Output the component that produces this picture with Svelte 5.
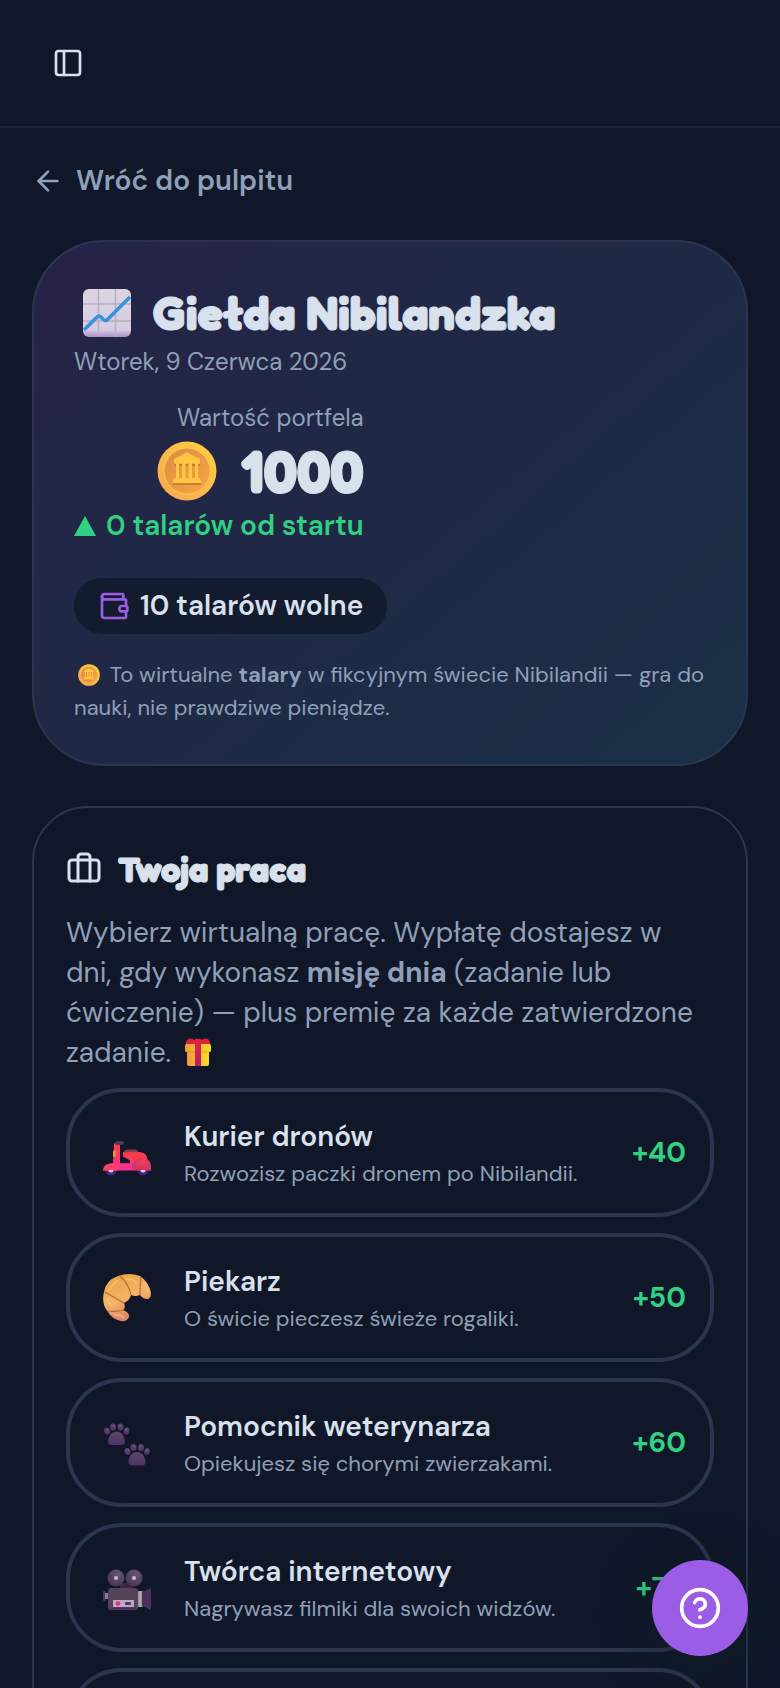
<script lang="ts">
  interface Job {
    icon: "scooter" | "croissant" | "paws" | "camera" | "gift";
    name: string;
    description: string;
    pay: number;
  }

  const jobs: Job[] = [
    { icon: "scooter", name: "Kurier dronów", description: "Rozwozisz paczki dronem po Nibilandii.", pay: 40 },
    { icon: "croissant", name: "Piekarz", description: "O świcie pieczesz świeże rogaliki.", pay: 50 },
    { icon: "paws", name: "Pomocnik weterynarza", description: "Opiekujesz się chorymi zwierzakami.", pay: 60 },
    { icon: "camera", name: "Twórca internetowy", description: "Nagrywasz filmiki dla swoich widzów.", pay: 70 },
    { icon: "gift", name: "Sprzedawca", description: "Pakujesz prezenty dla klientów.", pay: 80 }
  ];

  const total = 1000;
  const change = 0;
  const free = 10;

  let selected = $state("");
</script>

<!-- shared gradients for the emoji drawings -->
<svg class="defs" width="0" height="0" aria-hidden="true">
  <defs>
    <linearGradient id="paper" x1="0" y1="0" x2="0" y2="1">
      <stop offset="0" stop-color="#dcd6df" />
      <stop offset="0.85" stop-color="#d8cbe6" />
      <stop offset="1" stop-color="#a98fc0" />
    </linearGradient>
    <linearGradient id="coinRim" x1="1" y1="0" x2="0" y2="1">
      <stop offset="0" stop-color="#ffd040" />
      <stop offset="1" stop-color="#f7a552" />
    </linearGradient>
    <linearGradient id="coinFace" x1="0" y1="0" x2="1" y2="1">
      <stop offset="0" stop-color="#dd8d45" />
      <stop offset="1" stop-color="#f6a545" />
    </linearGradient>
    <linearGradient id="box" x1="0" y1="0" x2="1" y2="0">
      <stop offset="0" stop-color="#f39a3c" />
      <stop offset="1" stop-color="#fbdc28" />
    </linearGradient>
    <linearGradient id="ribbon" x1="0" y1="0" x2="0" y2="1">
      <stop offset="0" stop-color="#e0243c" />
      <stop offset="1" stop-color="#b3206f" />
    </linearGradient>
    <linearGradient id="red" x1="0" y1="0" x2="0" y2="1">
      <stop offset="0" stop-color="#ff4048" />
      <stop offset="1" stop-color="#f9309a" />
    </linearGradient>
    <radialGradient id="hull" cx="0.6" cy="0.3" r="0.8">
      <stop offset="0" stop-color="#ee3f60" />
      <stop offset="1" stop-color="#c9305f" />
    </radialGradient>
    <linearGradient id="crust" x1="0" y1="0" x2="0.4" y2="1">
      <stop offset="0" stop-color="#e9a23f" />
      <stop offset="0.6" stop-color="#f4b468" />
      <stop offset="1" stop-color="#dd7f63" />
    </linearGradient>
    <linearGradient id="pad" x1="0" y1="0" x2="0" y2="1">
      <stop offset="0" stop-color="#594a60" />
      <stop offset="1" stop-color="#50306e" />
    </linearGradient>
    <radialGradient id="reel" cx="0.6" cy="0.3" r="0.8">
      <stop offset="0" stop-color="#6a5670" />
      <stop offset="1" stop-color="#43324f" />
    </radialGradient>
    <linearGradient id="lens" x1="0" y1="0" x2="1" y2="0">
      <stop offset="0" stop-color="#8d8291" />
      <stop offset="0.6" stop-color="#b7adba" />
      <stop offset="1" stop-color="#75667d" />
    </linearGradient>
  </defs>
</svg>

{#snippet coin(cls: string)}
  <svg class={cls} viewBox="0 0 60 60" aria-hidden="true">
    <circle cx="30" cy="30" r="29.5" fill="url(#coinRim)" />
    <circle cx="30" cy="30" r="23.5" fill="#ffc84a" />
    <circle cx="30" cy="30" r="22.5" fill="url(#coinFace)" />
    <path d="M16 42h28v2H16zM18 23h25v2H18z" fill="#cd7b38" />
    <path
      d="M30 11.5 43 18v4.500H41V37h2v1.500h1V42H16v-3.500h1V37h2V22.500h-2V18ZM22 22.500V37h3V22.500Zm6.500 0V37h3V22.500Zm6.500 0V37h3V22.500Z"
      fill="#ffc642"
      fill-rule="evenodd"
    />
  </svg>
{/snippet}

{#snippet gift(cls: string)}
  <svg class={cls} viewBox="0 0 28 30" aria-hidden="true">
    <path d="M3 9a4 4 0 0 1 7-6 4 4 0 0 1 4-1 4 4 0 0 1 4 1 4 4 0 0 1 7 6Z" fill="#dc2238" />
    <path d="M3 11h22v16a2 2 0 0 1-2 2H5a2 2 0 0 1-2-2Z" fill="url(#box)" />
    <rect x="1" y="7" width="26" height="8" rx="1.500" fill="url(#box)" />
    <path d="M3 15h22" stroke="#d9822f" stroke-width="1" opacity="0.6" />
    <path d="M11 7l1-4h4l1 4v22h-6Z" fill="url(#ribbon)" />
  </svg>
{/snippet}

{#snippet jobIcon(name: Job["icon"])}
  {#if name === "scooter"}
    <svg class="emoji" viewBox="0 0 48 48" aria-hidden="true">
      <circle cx="8" cy="41" r="5.500" fill="#4d2377" />
      <circle cx="40" cy="41" r="5.500" fill="#4d2377" />
      <g transform="translate(0 10.5) scale(1 0.91)">
        <path d="M11 6q0-3 3-3h3v23h10v-3l-7-5v-4h17q7 1 7 7l4 8v5H0q1-7 10-8Z" fill="url(#red)" />
        <rect x="10" y="12" width="2.500" height="7" rx="1" fill="#e5a51b" />
        <path d="M20 14q8-2 17 0 7 1 7 8l-13 1-11-4Z" fill="#fb3a4c" />
        <path d="M21 14q0-3 5-3h5q4 0 4 3Z" fill="#84434b" />
        <path d="M0 34q0-8 10-8 5 0 5 8Z" fill="#fc3f66" />
        <path d="M29 29q1-8 9-8 7 0 9 4 2 5 0 9H33q-4 0-4-5" fill="url(#hull)" />
        <rect x="12" y="2" width="9" height="4" rx="2" fill="#503b52" />
      </g>
      <path d="M5.500 41a2.500 2.500 0 0 0 5 0ZM37.500 41a2.500 2.500 0 0 0 5 0Z" fill="#e3cdf0" />
    </svg>
  {:else if name === "croissant"}
    <svg class="emoji" viewBox="0 0 48 48" aria-hidden="true">
      <path
        d="M1 18Q3 6 15 2q11-4 22 0 9 6 11 17 0 6-4 6-4 0-7-4-5 2-9 0-1 5-7 8 2 5-1 7 7 3 6 7-2 5-8 4-9-2-13-9-7-8-4-20Z"
        fill="url(#crust)"
      />
      <path d="M2 18 21 29M17 2q9 8 11 19M38 3q-1 11-1 18M5 37q9 1 15-1" fill="none" stroke="#b96a3c" stroke-width="1.200" />
      <path d="M6 16q5-8 9-9M23 5q8 0 10 4M41 9q3 4 4 9M5 25q0 5 4 7M12 41q7 0 9 3" fill="none" stroke="#fbcf88" stroke-width="2" opacity="0.5" stroke-linecap="round" />
    </svg>
  {:else if name === "paws"}
    <svg class="emoji" viewBox="0 -2 48 48" aria-hidden="true">
      {#each [[0, 0], [20.5, 20.5]] as [x, y]}
        <g transform="translate({x} {y})" fill="url(#pad)">
          <ellipse cx="4" cy="10" rx="2.800" ry="3.600" transform="rotate(-15 4 10)" />
          <ellipse cx="10" cy="6" rx="3" ry="3.600" />
          <ellipse cx="17.500" cy="6" rx="3" ry="3.600" />
          <ellipse cx="23.500" cy="10" rx="2.800" ry="3.600" transform="rotate(15 23.500 10)" />
          <path d="M13.500 10.500q6 0 8 7 2 6.500-3 6.500h-10q-5 0-3-6.500 2-7 8-7" />
          <g fill="#806695" opacity="0.7">
            <circle cx="5" cy="9" r="1" />
            <circle cx="11" cy="5" r="1" />
            <circle cx="17" cy="5" r="1" />
            <circle cx="23" cy="9" r="1" />
          </g>
        </g>
      {/each}
    </svg>
  {:else if name === "camera"}
    <svg class="emoji" viewBox="0 -2 48 48" aria-hidden="true">
      <rect x="0" y="25" width="2.500" height="10" rx="1" fill="#4b3657" />
      <rect x="2" y="27" width="4" height="6" fill="#8d7d96" />
      <path d="M17 17h13v7H17Z" fill="#3c2646" />
      <circle cx="13" cy="12" r="8.500" fill="url(#reel)" />
      <circle cx="31" cy="12" r="8.500" fill="url(#reel)" />
      <circle cx="13" cy="12" r="2" fill="#c9bccd" />
      <circle cx="31" cy="12" r="2" fill="#c9bccd" />
      <rect x="34" y="25" width="6" height="16" fill="url(#lens)" />
      <path d="M39 26 48 22v22l-9-4Z" fill="#49305a" />
      <rect x="5" y="22" width="30" height="22" rx="3" fill="#544258" />
      <path d="M7 42.500h26" stroke="#48305c" stroke-width="2" />
      <rect x="10" y="34" width="21" height="7" fill="#bda8c9" />
      <circle cx="15" cy="37.500" r="2.300" fill="#f92f68" />
      <rect x="22" y="36" width="6" height="3" rx="1" fill="#4f3c58" />
    </svg>
  {:else}
    {@render gift("emoji")}
  {/if}
{/snippet}

<div class="shell">
  <header class="topbar">
    <button type="button" class="menu" aria-label="Przełącz panel boczny">
      <svg class="icon" width="32" height="32" viewBox="0 0 24 24" aria-hidden="true">
        <rect width="18" height="18" x="3" y="3" rx="2" />
        <path d="M9 3v18" />
      </svg>
    </button>
  </header>

  <main>
    <a class="back" href="#pulpit">
      <svg class="icon" width="32" height="32" viewBox="0 0 24 24" aria-hidden="true">
        <path d="m12 19-7-7 7-7" />
        <path d="M19 12H5" />
      </svg>
      Wróć do pulpitu
    </a>

    <section class="hero">
      <h1>
        <svg class="emoji" viewBox="0 0 48 48" aria-hidden="true">
          <rect width="48" height="48" rx="6" fill="url(#paper)" />
          <path d="M15.500 0v48M32.500 0v48M0 15h48M0 32h48" stroke="#b9aebd" stroke-width="1.500" />
          <path d="M1 41 14 28q2-2 4 0l2.500 2.500q2 2 4 0L47 8" fill="none" stroke="#3294dc" stroke-width="3.500" />
        </svg>
        Giełda Nibilandzka
      </h1>
      <p class="small">Wtorek, 9 Czerwca 2026</p>

      <div class="wallet">
        <span class="small">Wartość portfela</span>
        <strong class="total">{@render coin("coin")}{total}</strong>
        <span class="change">
          <svg width="22" height="20" viewBox="0 0 22 20" aria-hidden="true"><path d="M11 0 22 20H0Z" fill="currentColor" /></svg>
          {change} talarów od startu
        </span>
      </div>

      <div class="pill">
        <svg class="icon" width="32" height="32" viewBox="0 0 24 24" aria-hidden="true">
          <path d="M19 7V4a1 1 0 0 0-1-1H5a2 2 0 0 0 0 4h15a1 1 0 0 1 1 1v4h-3a2 2 0 0 0 0 4h3a1 1 0 0 0 1-1v-2a1 1 0 0 0-1-1" />
          <path d="M3 5v14a2 2 0 0 0 2 2h15a1 1 0 0 0 1-1v-4" />
        </svg>
        {free} talarów wolne
      </div>

      <p class="note">
        {@render coin("coin-inline")} To wirtualne <b>talary</b> w fikcyjnym świecie Nibilandii — gra do nauki, nie prawdziwe pieniądze.
      </p>
    </section>

    <section class="work">
      <h2>
        <svg class="icon" width="36" height="36" viewBox="0 0 24 24" aria-hidden="true">
          <path d="M16 20V4a2 2 0 0 0-2-2h-4a2 2 0 0 0-2 2v16" />
          <rect width="20" height="14" x="2" y="6" rx="2" />
        </svg>
        Twoja praca
      </h2>
      <p class="intro">
        Wybierz wirtualną pracę. Wypłatę dostajesz w dni, gdy wykonasz <b>misję dnia</b> (zadanie lub ćwiczenie) — plus premię za każde zatwierdzone zadanie. {@render gift("gift-inline")}
      </p>

      <div class="jobs">
        {#each jobs as job (job.name)}
          <button type="button" class="job" class:selected={selected === job.name} onclick={() => (selected = job.name)}>
            {@render jobIcon(job.icon)}
            <span class="job-text">
              <span class="job-name">{job.name}</span>
              <span class="job-description">{job.description}</span>
            </span>
            <span class="pay">+{job.pay}</span>
          </button>
        {/each}
      </div>
    </section>
  </main>

  <button type="button" class="help" aria-label="Pomoc">
    <svg class="icon" width="44" height="44" viewBox="0 0 24 24" aria-hidden="true">
      <circle cx="12" cy="12" r="10" />
      <path d="M9.090 9a3 3 0 0 1 5.830 1c0 2-3 3-3 3" />
      <path d="M12 17h.01" />
    </svg>
  </button>
</div>

<style>
  :global(body) {
    margin: 0;
    background: #101728;
  }

  .shell {
    --text: #d9e1ec;
    --muted: #8fa0b8;
    --line: #2b364e;
    --green: #31d083;
    --purple: #9b5de5;
    height: 100vh;
    overflow: hidden;
    background: #101728;
    color: var(--text);
    font-family: "DM Sans", "Open Sans", sans-serif;
    font-size: 28px;
    line-height: 40px;
  }

  .defs {
    position: absolute;
  }

  button {
    padding: 0;
    border: 0;
    background: none;
    color: inherit;
    font: inherit;
    text-align: left;
    cursor: pointer;
  }

  h1,
  h2,
  p {
    margin: 0;
  }

  .icon {
    flex: none;
    fill: none;
    stroke: currentColor;
    stroke-width: 2;
    stroke-linecap: round;
    stroke-linejoin: round;
  }

  .emoji {
    flex: none;
    width: 48px;
    height: 48px;
    margin: 0 9px;
  }

  .topbar {
    display: flex;
    align-items: center;
    height: 126px;
    padding: 0 40px;
    border-bottom: 2px solid #1b2638;
  }

  .menu {
    display: flex;
    padding: 12px;
  }

  main {
    display: flex;
    flex-direction: column;
    padding: 32px;
  }

  .back {
    display: flex;
    align-items: center;
    align-self: flex-start;
    gap: 12px;
    margin-bottom: 38px;
    color: var(--muted);
    font-weight: 600;
    line-height: 42px;
    text-decoration: none;
  }

  .hero {
    display: flex;
    flex-direction: column;
    align-items: flex-start;
    margin-bottom: 40px;
    padding: 40px;
    border: 2px solid var(--line);
    border-radius: 72px;
    background: linear-gradient(140deg, #262346 0%, #1f2946 50%, #1a3047 100%);
  }

  h1,
  h2,
  .total {
    display: flex;
    align-items: center;
    font-family: "Fredoka One", "Fredoka", "Lato", sans-serif;
    font-weight: 700;
    -webkit-text-stroke: 1px currentColor;
  }

  h1 {
    gap: 12px;
    font-size: 47px;
    line-height: 62px;
  }

  .small {
    color: var(--muted);
    font-size: 24px;
    line-height: 36px;
  }

  .wallet {
    display: flex;
    flex-direction: column;
    align-items: flex-end;
    margin-top: 20px;
  }

  .total {
    gap: 24px;
    font-size: 59px;
    line-height: 70px;
  }

  .coin {
    width: 60px;
    height: 60px;
  }

  .change {
    display: flex;
    align-items: center;
    gap: 10px;
    color: var(--green);
    font-weight: 600;
  }

  .pill {
    display: flex;
    align-items: center;
    gap: 10px;
    margin-top: 32px;
    padding: 8px 24px;
    border-radius: 28px;
    background: #131b2f;
    font-weight: 600;
  }

  .pill .icon {
    color: var(--purple);
  }

  .note {
    margin-top: 24px;
    color: var(--muted);
    font-size: 22px;
    line-height: 33px;
  }

  .coin-inline {
    width: 22px;
    height: 22px;
    margin: 0 4px;
    vertical-align: -4px;
  }

  .work {
    padding: 32px;
    border: 2px solid var(--line);
    border-radius: 56px;
  }

  h2 {
    gap: 16px;
    margin-bottom: 15px;
    font-size: 35px;
    line-height: 58px;
  }

  .intro {
    margin-bottom: 15px;
    color: var(--muted);
  }

  .gift-inline {
    width: 28px;
    height: 30px;
    margin-left: 5px;
    vertical-align: -5px;
  }

  .jobs {
    display: flex;
    flex-direction: column;
    gap: 16px;
  }

  .job {
    display: flex;
    align-items: center;
    gap: 24px;
    padding: 24px;
    border: 4px solid var(--line);
    border-radius: 56px;
  }

  .job.selected {
    border-color: var(--purple);
  }

  .job-text {
    display: flex;
    flex: 1;
    flex-direction: column;
    min-width: 0;
  }

  .job-name {
    font-weight: 600;
    line-height: 42px;
  }

  .job-description {
    color: var(--muted);
    font-size: 22px;
    line-height: 31px;
  }

  .pay {
    color: var(--green);
    font-weight: 700;
  }

  .help {
    position: fixed;
    right: 32px;
    bottom: 32px;
    display: flex;
    align-items: center;
    justify-content: center;
    width: 96px;
    height: 96px;
    border-radius: 50%;
    background: var(--purple);
    box-shadow: 0 8px 48px rgba(14, 34, 40, 0.5);
    color: #fff;
  }
</style>
